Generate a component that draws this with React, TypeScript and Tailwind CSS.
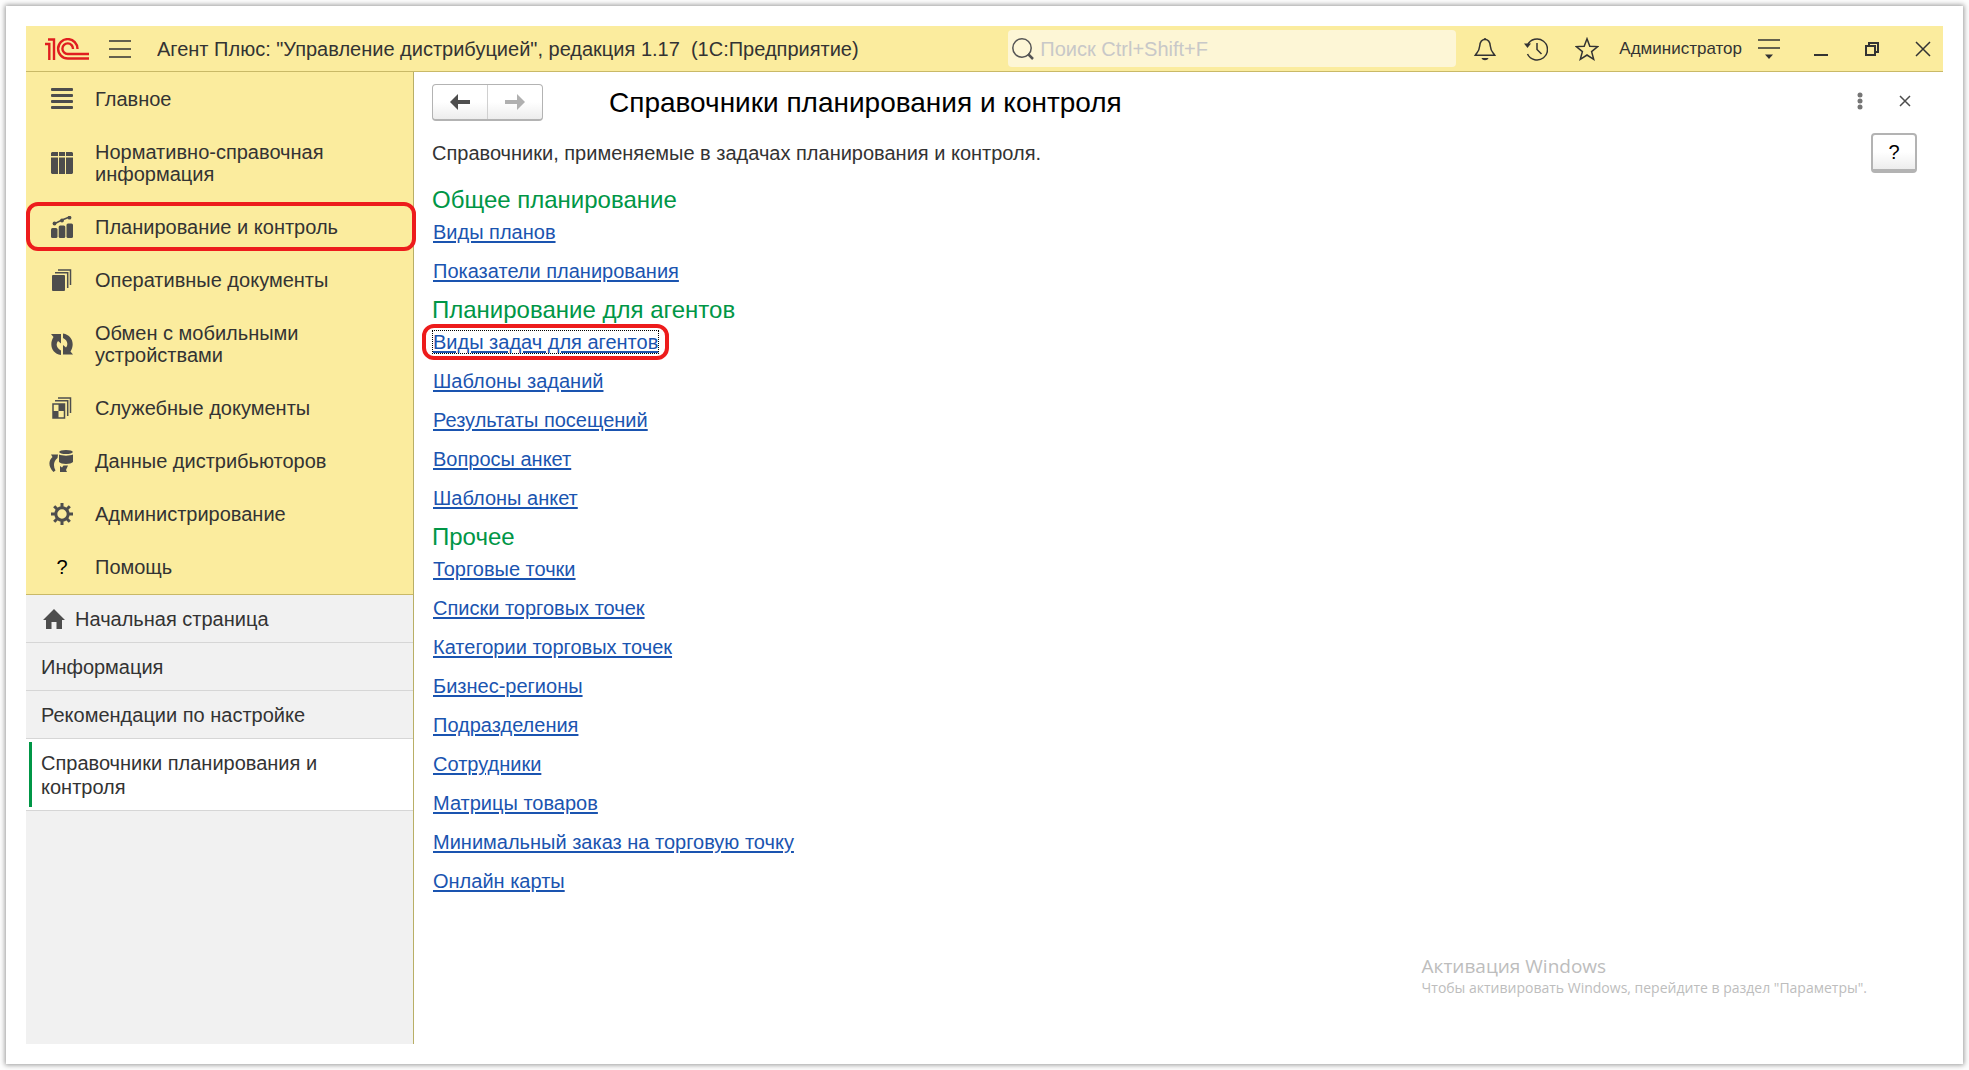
import { useState, type ReactNode } from 'react';

type Section = { id: string; label: string; icon: ReactNode };

const sections: Section[] = [
  {
    id: 'main',
    label: 'Главное',
    icon: (
      <svg viewBox="0 0 22 22" className="size-[22px]" fill="currentColor">
        <rect y="0" width="22" height="3" rx="1" />
        <rect y="6" width="22" height="3" rx="1" />
        <rect y="12" width="22" height="3" rx="1" />
        <rect y="18" width="22" height="3" rx="1" />
      </svg>
    ),
  },
  {
    id: 'nsi',
    label: 'Нормативно-справочная информация',
    icon: (
      <svg viewBox="0 0 22 22" className="size-[22px]" fill="currentColor">
        <path d="M1 0h6v4H0V1zM8 0h6v4H8zM15 0H21l1 1v3h-7zM0 5.500h7V22H1l-1-1zM8 5.500h6V22H8zM15 5.500H22V21l-1 1h-6z" />
      </svg>
    ),
  },
  {
    id: 'planning',
    label: 'Планирование и контроль',
    icon: (
      <svg viewBox="0 0 22 22" className="size-[22px]" fill="currentColor">
        <rect x="0" y="12" width="6.500" height="10" rx="1.500" />
        <rect x="7.700" y="9.500" width="6.600" height="12.500" rx="1.500" />
        <rect x="15.500" y="7.500" width="6.500" height="14.500" rx="1.500" />
        <path d="M3 8l8-4 7.500-3" fill="none" stroke="currentColor" strokeWidth="1.500" />
        <circle cx="3.500" cy="7.500" r="1.900" />
        <circle cx="11" cy="4.500" r="1.900" />
        <circle cx="18.500" cy="1.700" r="1.900" />
      </svg>
    ),
  },
  {
    id: 'operative',
    label: 'Оперативные документы',
    icon: (
      <svg viewBox="0 0 22 22" className="size-[22px]" fill="currentColor">
        <rect x="1" y="6" width="13" height="16" rx="1" />
        <path d="M4 3.700h12.700V19M7 1h12.500v15" fill="none" stroke="currentColor" strokeWidth="1.500" />
      </svg>
    ),
  },
  {
    id: 'exchange',
    label: 'Обмен с мобильными устройствами',
    icon: (
      <svg viewBox="0 0 22 22" className="size-[22px]" fill="currentColor">
        <path d="M0 1h10v9.500L7 8C4.500 11 5.500 15.500 10 17.500V22C.5 20.500-2 11 2.500 4z" />
        <path d="M22 21.500H12V12l3 2.500C17.500 11.500 16.500 7 12 5V.5C21.500 2 24 11.500 19.500 18.500z" />
      </svg>
    ),
  },
  {
    id: 'service',
    label: 'Служебные документы',
    icon: (
      <svg viewBox="0 0 22 22" className="size-[22px]" fill="currentColor">
        <path d="M2 7h11.500v14H2zM4 3.700h12.700V19M7 1h12.500v15" fill="none" stroke="currentColor" strokeWidth="1.500" />
        <path d="M7.500 7H13v7H7.500zM2 14h5.500v7H2z" />
      </svg>
    ),
  },
  {
    id: 'distributors',
    label: 'Данные дистрибьюторов',
    icon: (
      <svg viewBox="0 0 24 22" className="-ml-0.5 h-[22px] w-6 shrink-0" fill="currentColor">
        <ellipse cx="17" cy="2" rx="6.800" ry="2" />
        <path d="M10 4.500c3 1.500 11 1.500 14 0V12c-2 2.500-12 2.500-14 0z" />
        <path d="M2 4.500h7L8.500 8C4.500 11 4 16 6.500 20.500L4.500 22C-.5 17-1 11 3.500 7z" />
        <path d="M19 15.500l-2 4.500 1 2H11v-6l2 1.500 1.500-2z" />
      </svg>
    ),
  },
  {
    id: 'admin',
    label: 'Администрирование',
    icon: (
      <svg viewBox="0 0 22 22" className="size-[22px]" fill="none" stroke="currentColor">
        <circle cx="11" cy="11" r="6.200" strokeWidth="3" />
        <path
          d="M11 0v4M11 18v4M0 11h4M18 11h4M3.200 3.200l3 3M15.800 15.800l3 3M3.200 18.800l3-3M15.800 6.200l3-3"
          strokeWidth="3"
        />
      </svg>
    ),
  },
  {
    id: 'help',
    label: 'Помощь',
    icon: <span className="w-[22px] text-center text-xl leading-[22px] text-black">?</span>,
  },
];

const groups = [
  { title: 'Общее планирование', links: ['Виды планов', 'Показатели планирования'] },
  {
    title: 'Планирование для агентов',
    links: ['Виды задач для агентов', 'Шаблоны заданий', 'Результаты посещений', 'Вопросы анкет', 'Шаблоны анкет'],
  },
  {
    title: 'Прочее',
    links: [
      'Торговые точки',
      'Списки торговых точек',
      'Категории торговых точек',
      'Бизнес-регионы',
      'Подразделения',
      'Сотрудники',
      'Матрицы товаров',
      'Минимальный заказ на торговую точку',
      'Онлайн карты',
    ],
  },
];

const pages = ['Начальная страница', 'Информация', 'Рекомендации по настройке', 'Справочники планирования и контроля'];

function Logo() {
  return (
    <svg viewBox="0 0 44 22" className="h-[22px] w-11 shrink-0" fill="none" stroke="#e01e1f" strokeWidth="2.400">
      <path d="M0 6h4.300V22M3 1.500h6V22" />
      <path d="M32.500 11A9.700 9.700 0 1 0 22.800 20.500H44" />
      <path d="M28 11A5.300 5.300 0 1 0 22.800 16H44" />
    </svg>
  );
}

function TitleBar() {
  const [query, setQuery] = useState('');

  return (
    <header className="flex h-[46px] items-center border-b border-[#c9b967] bg-[#fbec9e] text-[#333]">
      <div className="flex min-w-0 flex-1 items-center pl-[19px]">
        <Logo />
        <button type="button" aria-label="Меню" className="ml-5 shrink-0">
          <svg viewBox="0 0 22 18" className="h-[18px] w-[22px]" stroke="currentColor" strokeWidth="1.500">
            <path d="M0 1h22M0 9h22M0 17h22" />
          </svg>
        </button>
        <h1 className="ml-[26px] truncate whitespace-pre text-xl">
          {'Агент Плюс: "Управление дистрибуцией", редакция 1.17  (1С:Предприятие)'}
        </h1>
      </div>

      <label className="flex h-[37px] w-[448px] items-center gap-1.5 rounded-sm bg-[#fdf6d6] pl-1">
        <svg viewBox="0 0 22 22" className="size-[22px] shrink-0" fill="none" stroke="#555">
          <circle cx="10" cy="10" r="9.200" strokeWidth="1.500" />
          <path d="M16 16l5 5" strokeWidth="2.500" />
        </svg>
        <input
          type="search"
          aria-label="Поиск"
          value={query}
          onChange={(e) => setQuery(e.target.value)}
          placeholder="Поиск Ctrl+Shift+F"
          className="min-w-0 flex-1 bg-transparent text-xl outline-none placeholder:text-[#c8c8c8]"
        />
      </label>

      <div className="flex items-center pr-3 pl-[17px]">
        <div className="flex items-center gap-[27px]">
          <button type="button" aria-label="Уведомления">
            <svg viewBox="0 0 24 24" className="size-6" fill="none" stroke="currentColor" strokeWidth="1.500">
              <path d="M12 2.500c-4 0-5 3-5.300 6.500C6.300 14 4.500 15 2.300 18.200h19.400C19.500 15 17.700 14 17.300 9 17 5.500 16 2.500 12 2.500z" />
              <path d="M10.500 2.500a1.500 1.500 0 0 1 3 0zM8.500 21h7c-1 3-6 3-7 0z" fill="currentColor" stroke="none" />
            </svg>
          </button>
          <button type="button" aria-label="История">
            <svg viewBox="0 0 24 24" className="size-6" fill="none" stroke="currentColor" strokeWidth="1.500">
              <path d="M3.500 8A10.500 10.500 0 1 1 3.500 17M13 6v6.500l4.500 4.500" />
              <path d="M0 6.500h7L3.500 11z" fill="currentColor" stroke="none" />
            </svg>
          </button>
          <button type="button" aria-label="Избранное">
            <svg viewBox="0 0 24 24" className="size-6" fill="none" stroke="currentColor" strokeWidth="1.500">
              <path d="M12 1.800l2.800 7.400 8 .4-6.200 5 2.100 7.700L12 18l-6.700 4.300 2.100-7.700-6.200-5 8-.4z" />
            </svg>
          </button>
        </div>
        <button type="button" className="ml-5 text-[17px] leading-6">
          Администратор
        </button>
        <button type="button" aria-label="Настройки" className="ml-4">
          <svg viewBox="0 0 22 20" className="h-5 w-[22px]" stroke="currentColor" strokeWidth="1.500">
            <path d="M0 1h22M0 9h22" />
            <path d="M7 15.500h8L11 20z" fill="currentColor" stroke="none" />
          </svg>
        </button>
        <div className="ml-[33px] flex items-center gap-[35px]">
          <button type="button" aria-label="Свернуть">
            <svg viewBox="0 0 16 16" className="size-4" stroke="currentColor" strokeWidth="2">
              <path d="M1 14h14" />
            </svg>
          </button>
          <button type="button" aria-label="Развернуть">
            <svg viewBox="0 0 16 16" className="size-4" fill="none" stroke="currentColor" strokeWidth="2">
              <path d="M2 5h9v9H2zM5 5V2h9v9h-3" />
            </svg>
          </button>
          <button type="button" aria-label="Закрыть">
            <svg viewBox="0 0 16 16" className="size-4" stroke="currentColor" strokeWidth="1.500">
              <path d="M1 1l14 14M15 1L1 15" />
            </svg>
          </button>
        </div>
      </div>
    </header>
  );
}

function Sidebar() {
  return (
    <aside className="flex w-[388px] shrink-0 flex-col border-r border-[#b9af66] bg-[#f1f1f1] text-xl text-[#333]">
      <nav className="border-b border-[#c9b967] bg-[#fbec9e] pb-px leading-[22px]">
        {sections.map((section) => (
          <a key={section.id} href={`#${section.id}`} className="relative flex items-center gap-[22px] pt-4 pr-14 pb-[15px] pl-[25px]">
            <span className="flex w-[22px] shrink-0 justify-center text-[#4d4d4d]">{section.icon}</span>
            <span>{section.label}</span>
            {section.id === 'planning' && (
              <span className="absolute inset-y-0.5 -right-[3px] left-0 rounded-xl border-4 border-[#ed1c1c]" />
            )}
          </a>
        ))}
      </nav>

      <nav className="leading-6">
        {pages.map((page, i) => {
          const active = i === pages.length - 1;
          return (
            <a
              key={page}
              href="#page"
              className={`relative flex items-center border-b border-[#d6d6d6] pt-3 pr-16 pb-[11px] pl-[15px] ${active ? 'bg-white' : ''}`}
            >
              {active && <span className="absolute inset-y-[3px] left-[3px] w-[3px] bg-[#009646]" />}
              {i === 0 && (
                <svg viewBox="0 0 22 20" className="mr-2.5 ml-0.5 h-5 w-[22px]" fill="#4d4d4d">
                  <path d="M11 0l11 11h-3v9h-5.500v-7h-5v7H3v-9H0z" />
                </svg>
              )}
              {page}
            </a>
          );
        })}
      </nav>
    </aside>
  );
}

export default function App() {
  return (
    <div className="flex min-h-screen bg-[#fdfdfd] p-1.5 font-['Liberation_Sans',Arial,sans-serif]">
      <div className="flex min-w-0 flex-1 flex-col bg-white p-5 shadow-[0_0_5px_1px_rgba(0,0,0,0.4)]">
        <TitleBar />

        <div className="flex flex-1">
          <Sidebar />

          <main className="flex min-w-0 flex-1 flex-col pt-3 pr-[26px] pb-[46px] pl-[18px]">
            <div className="flex items-center">
              <div className="flex h-[37px] w-[111px] rounded border border-b-2 border-[#b3b3b3] bg-linear-to-b from-white from-50% to-[#ededed]">
                <button type="button" aria-label="Назад" className="flex flex-1 items-center justify-center border-r border-[#d0d0d0] text-[#4d4d4d]">
                  <svg viewBox="0 0 20 16" className="h-4 w-5" fill="currentColor">
                    <path d="M0 8l8-8v6h12v4H8v6z" />
                  </svg>
                </button>
                <button type="button" aria-label="Вперед" className="flex flex-1 items-center justify-center text-[#b0b0b0]">
                  <svg viewBox="0 0 20 16" className="h-4 w-5" fill="currentColor">
                    <path d="M20 8l-8-8v6H0v4h12v6z" />
                  </svg>
                </button>
              </div>
              <h2 className="ml-[66px] flex-1 text-[28px] leading-9 text-black">Справочники планирования и контроля</h2>
              <div className="flex h-[34px] items-center gap-9 self-start pr-1.5">
                <button type="button" aria-label="Еще">
                  <svg viewBox="0 0 6 18" className="h-[18px] w-1.5" fill="#757575">
                    <circle cx="3" cy="3" r="2.500" />
                    <circle cx="3" cy="9" r="2.500" />
                    <circle cx="3" cy="15" r="2.500" />
                  </svg>
                </button>
                <button type="button" aria-label="Закрыть страницу">
                  <svg viewBox="0 0 12 12" className="size-3" stroke="#4d4d4d" strokeWidth="1.500">
                    <path d="M1 1l10 10M11 1L1 11" />
                  </svg>
                </button>
              </div>
            </div>

            <div className="mt-3 flex h-10 items-center justify-between">
              <p className="text-xl text-[#333]">Справочники, применяемые в задачах планирования и контроля.</p>
              <button
                type="button"
                className="h-10 w-[46px] rounded border-2 border-b-4 border-[#b3b3b3] bg-linear-to-b from-white from-50% to-[#ededed] text-xl text-black"
              >
                ?
              </button>
            </div>

            <div className="mt-[7px]">
              {groups.map((group) => (
                <section key={group.title}>
                  <h3 className="pt-2 text-2xl leading-6 text-[#009646]">{group.title}</h3>
                  <ul>
                    {group.links.map((link) => (
                      <li key={link} className="flex h-[39px] items-center">
                        <a href="#catalog" className="relative ml-px text-xl leading-6 text-[#1a54b0] underline underline-offset-2">
                          {link}
                          {link === 'Виды задач для агентов' && (
                            <>
                              <span className="absolute -inset-x-px inset-y-0 border border-dotted border-black" />
                              <span className="absolute -inset-x-[11px] -inset-y-1.5 rounded-xl border-4 border-[#ed1c1c]" />
                            </>
                          )}
                        </a>
                      </li>
                    ))}
                  </ul>
                </section>
              ))}
            </div>

            <div className="mt-auto mr-[50px] self-end font-['Open_Sans','Noto_Sans',sans-serif] text-[#bdbdbd]">
              <p className="text-[19px] leading-6">Активация Windows</p>
              <p className="text-sm leading-5">Чтобы активировать Windows, перейдите в раздел "Параметры".</p>
            </div>
          </main>
        </div>
      </div>
    </div>
  );
}
